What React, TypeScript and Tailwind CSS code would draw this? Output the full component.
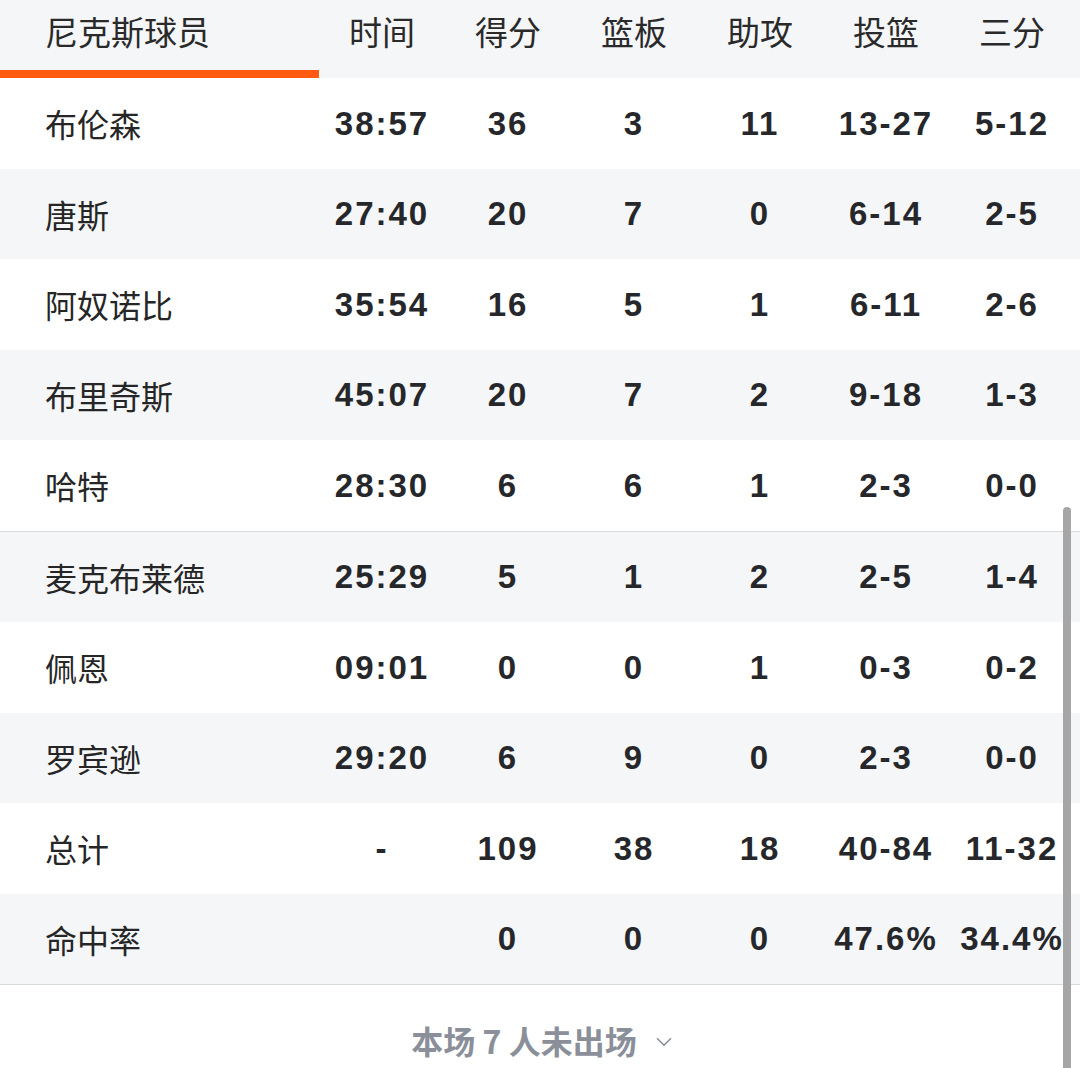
import { ChevronDown } from 'lucide-react'

type Row = [string, string, string, string, string, string, string]

const HEAD = ['尼克斯球员', '时间', '得分', '篮板', '助攻', '投篮', '三分']

const STARTERS: Row[] = [
  ['布伦森', '38:57', '36', '3', '11', '13-27', '5-12'],
  ['唐斯', '27:40', '20', '7', '0', '6-14', '2-5'],
  ['阿奴诺比', '35:54', '16', '5', '1', '6-11', '2-6'],
  ['布里奇斯', '45:07', '20', '7', '2', '9-18', '1-3'],
  ['哈特', '28:30', '6', '6', '1', '2-3', '0-0'],
]

const BENCH: Row[] = [
  ['麦克布莱德', '25:29', '5', '1', '2', '2-5', '1-4'],
  ['佩恩', '09:01', '0', '0', '1', '0-3', '0-2'],
  ['罗宾逊', '29:20', '6', '9', '0', '2-3', '0-0'],
  ['总计', '-', '109', '38', '18', '40-84', '11-32'],
  ['命中率', '', '0', '0', '0', '47.6%', '34.4%'],
]

const grid = 'grid grid-cols-[319px_repeat(6,126px)]'

function StatRow({ row, gray }: { row: Row; gray: boolean }) {
  return (
    <div className={`${grid} h-[90.5px] items-center ${gray ? 'bg-[#f5f6f8]' : 'bg-white'}`}>
      <div className="pl-[45px] text-[32px] text-[#262626] font-['Noto_Sans_CJK_SC',sans-serif]">
        {row[0]}
      </div>
      {row.slice(1).map((v, i) => (
        <div
          key={i}
          className="text-center text-[33px] font-bold tracking-[0.06em] text-[#26272b] font-['Liberation_Sans',Arial,sans-serif]"
        >
          {v}
        </div>
      ))}
    </div>
  )
}

export default function App() {
  return (
    <div className="relative w-[1080px] h-[1068px] overflow-hidden bg-white">
      {/* 表头 */}
      <div className={`${grid} h-[78px] bg-[#f5f6f8]`}>
        {HEAD.map((h, i) => (
          <div
            key={h}
            className={
              i === 0
                ? 'relative flex items-center pl-[45px] pb-[14px] text-[33px] text-[#2a2a2a] font-["Noto_Sans_CJK_SC",sans-serif]'
                : 'flex items-center justify-center pb-[14px] text-[33px] text-[#2a2a2a] font-["Noto_Sans_CJK_SC",sans-serif]'
            }
          >
            {h}
            {i === 0 && <span className="absolute left-0 right-0 bottom-0 h-[8px] bg-[#ff5a0f]" />}
          </div>
        ))}
      </div>

      {STARTERS.map((r, i) => (
        <StatRow key={r[0]} row={r} gray={i % 2 === 1} />
      ))}
      <div className="h-px bg-[#d6d9de]" />
      {BENCH.map((r, i) => (
        <StatRow key={r[0]} row={r} gray={i % 2 === 0} />
      ))}
      <div className="h-px bg-[#d6d9de]" />

      {/* 未出场 */}
      <div className="flex h-[84px] items-center justify-center gap-[14px] pt-[26px] pl-[8px]">
        <span className="text-[32px] font-semibold text-[#8a8f9a] font-['Noto_Sans_CJK_SC',sans-serif]">
          本场 7 人未出场
        </span>
        <ChevronDown size={26} strokeWidth={1.5} className="text-[#8a8f9a] mt-1" />
      </div>

      {/* 滚动条 */}
      <div className="absolute left-[1063px] top-[507px] w-[8px] h-[580px] rounded-full bg-[#a6a6a6]" />
    </div>
  )
}
